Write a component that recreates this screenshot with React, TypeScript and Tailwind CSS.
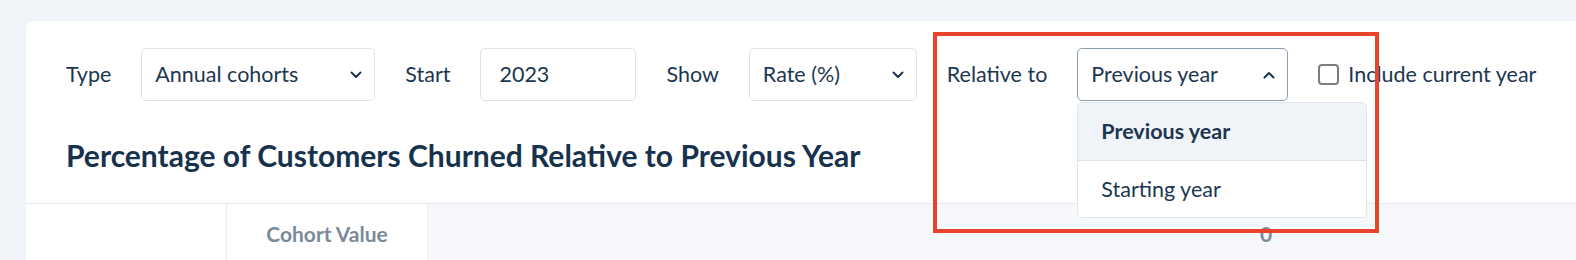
import React from "react";

function Chevron({ up = false }: { up?: boolean }) {
  return (
    <svg width="12" height="8" viewBox="0 0 12 8" fill="none" className="shrink-0">
      <path
        d={up ? "M1.5 6.5L6 2l4.5 4.5" : "M1.5 1.5L6 6l4.5-4.5"}
        stroke="#1d3650"
        strokeWidth="2"
        strokeLinecap="round"
        strokeLinejoin="round"
      />
    </svg>
  );
}

function Select({ value, width, open = false }: { value: string; width: string; open?: boolean }) {
  return (
    <div
      className={`flex h-[53px] ${width} items-center justify-between rounded-[5px] border bg-white pl-[13px] pr-[12px] ${
        open ? "border-[#8c9fb2]" : "border-[#dde3ea]"
      }`}
    >
      <span>{value}</span>
      <Chevron up={open} />
    </div>
  );
}

export default function App() {
  const options = ["Previous year", "Starting year"];

  return (
    <div
      className="min-h-[260px] bg-[#f0f3f7] pl-[26px] pt-[21px] text-[21.5px] text-[#1d3650]"
      style={{ fontFamily: "Lato, 'Noto Sans', sans-serif" }}
    >
      <div className="relative h-[239px] overflow-hidden rounded-tl-[8px] bg-white">
        {/* Filter row */}
        <div className="flex items-center gap-[30px] pl-[40px] pt-[27px]">
          <span>Type</span>
          <Select value="Annual cohorts" width="w-[234px]" />
          <span>Start</span>
          <div className="flex h-[53px] w-[156px] items-center rounded-[5px] border border-[#dde3ea] pl-[18px]">
            2023
          </div>
          <span>Show</span>
          <Select value="Rate (%)" width="w-[168px]" />
          <span>Relative to</span>
          <div className="relative">
            <Select value="Previous year" width="w-[211px]" open />
            <div className="absolute left-0 top-[54px] z-10 w-[290px] overflow-hidden rounded-[5px] border border-[#dfe5ec] bg-white">
              {options.map((opt, i) => (
                <div
                  key={opt}
                  className={`flex h-[57px] items-center pl-[23px] ${
                    i === 0 ? "bg-[#f0f3f8] font-bold" : "border-t border-[#dde3ea]"
                  }`}
                >
                  {opt}
                </div>
              ))}
            </div>
          </div>
          <label className="flex items-center gap-[9px]">
            <span className="h-[21px] w-[21px] rounded-[4px] border-2 border-[#7d7d7d] bg-white" />
            <span>Include current year</span>
          </label>
        </div>

        {/* Title */}
        <h2 className="mt-[36px] pl-[40px] text-[30px] font-bold leading-[36px] text-[#17324d]">
          Percentage of Customers Churned Relative to Previous Year
        </h2>

        {/* Table header */}
        <div className="mt-[30px] flex h-[60px] border-t border-[#e2e7ed] bg-[#f6f8fb] text-[21px] font-bold text-[#7b8a97]">
          <div className="w-[200px] bg-white" />
          <div className="flex w-[202px] items-center justify-center border-x border-[#e8edf2] bg-white">
            Cohort Value
          </div>
          <div className="w-[738px]" />
          <div className="flex w-[200px] items-center justify-center">0</div>
        </div>
      </div>

      {/* Annotation highlight */}
      <div className="pointer-events-none absolute left-[933px] top-[32px] h-[201px] w-[446px] border-4 border-[#e8432b]" />
    </div>
  );
}
